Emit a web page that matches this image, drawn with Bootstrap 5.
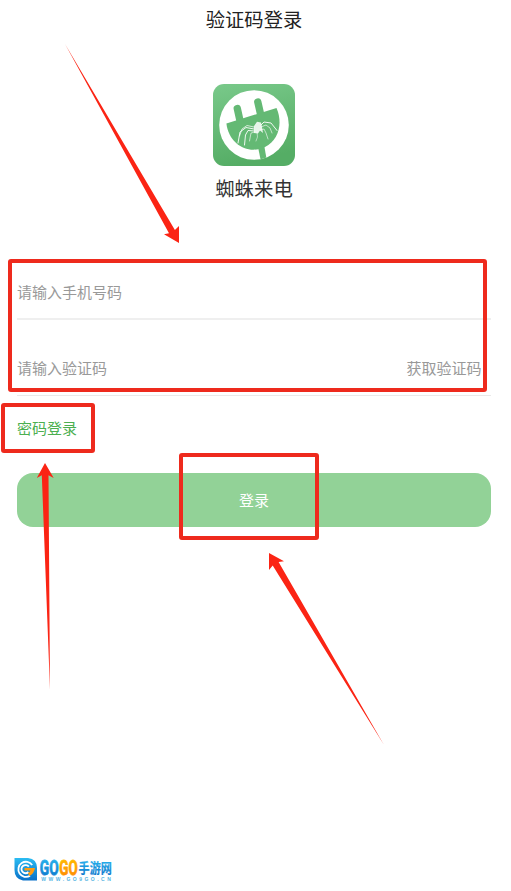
<!DOCTYPE html>
<html lang="zh-CN">
<head>
    <meta charset="UTF-8">
    <meta name="viewport" content="width=device-width, initial-scale=1">
    <title>验证码登录</title>
    <link rel="stylesheet" href="https://cdn.jsdelivr.net/npm/bootstrap@5.3.0/dist/css/bootstrap.min.css">
    <script src="https://cdn.jsdelivr.net/npm/bootstrap@5.3.0/dist/js/bootstrap.bundle.min.js"></script>
    <style>
        body {
            font-family: "Noto Sans CJK SC", sans-serif;
            font-size: 15px;
            color: #333;
            background: #fff;
        }
        .login-page {
            height: 891px;
            padding: 0 20px 0 17px;
            overflow: hidden;
        }
        .page-title {
            height: 40px;
            font-size: 19.3px;
            color: #222;
        }
        .app-brand {
            padding-top: 42.5px;
            height: 223.5px;
        }
        .app-name {
            font-size: 19.4px;
            line-height: 28px;
            margin-top: 7.5px;
        }
        .field-row {
            border-bottom: 2px solid #efefef;
        }
        .field-phone {
            height: 56px;
            padding-top: 2px;
        }
        .field-code {
            height: 76px;
            padding-top: 21px;
            border-bottom: 1px solid #e9e9e9;
        }
        .field-row .form-control,
        .code-btn {
            font-size: 15px;
            line-height: 22px;
            color: #999;
        }
        .field-row .form-control::placeholder { color: #999; }
        .code-btn { margin-right: 9.5px; }
        .pwd-link {
            color: #4caf50;
            line-height: 22px;
            margin-top: 21px;
        }
        .login-btn {
            --bs-btn-color: #fff;
            --bs-btn-bg: #92d297;
            --bs-btn-border-radius: 16px;
            height: 54px;
            margin-top: 34px;
            padding: 1px 0 0;
            font-size: 15px;
        }
        .site-logo { margin-left: -3px; margin-bottom: 8px; }
        .marks { pointer-events: none; }
    </style>
</head>
<body>
<div class="login-page d-flex flex-column position-relative">
    <h1 class="page-title d-flex align-items-center justify-content-center fw-normal mb-0">验证码登录</h1>

    <div class="app-brand d-flex flex-column align-items-center">
        <svg width="84" height="84" viewBox="0 0 84 84">
            <defs>
                <linearGradient id="tile" x1="0" y1="0" x2="0.25" y2="1">
                    <stop offset="0" stop-color="#79c98a"/>
                    <stop offset="1" stop-color="#55ad65"/>
                </linearGradient>
            </defs>
            <rect x="1" y="1" width="82" height="82" rx="11" fill="url(#tile)"/>
            <circle cx="42" cy="42" r="34.8" fill="#fff"/>
            <!-- plug -->
            <g fill="#64b974">
                <path d="M14.4 40.5 L64.5 25 C71 40 67 57 53 64 C37 72 17 62 14.4 40.5Z"/>
                <path d="M25.3 25.5 L28.5 40 M45.8 19 L49 33" stroke="#64b974" stroke-width="7.4" stroke-linecap="round"/>
                <path d="M46 64 L52.3 63 L54.3 74.5 Q51.5 75.9 48.5 76.2Z"/>
            </g>
            <!-- spider -->
            <g fill="none" stroke="#fff" stroke-width=".9" stroke-linejoin="round" stroke-linecap="round">
                <path d="M42 46 L34 44.5 L28 49 L26 60"/>
                <path d="M42 44 L35 42.5 L30 46 L27.5 53" stroke-width=".7"/>
                <path d="M42 48 L36 47.5 L33.5 52 L32.5 62"/>
                <path d="M43 49 L39 50 L37.5 58" stroke-width=".6"/>
                <path d="M49 42 L52 39 L59 40 L65 47.5"/>
                <path d="M49 44 L54 42 L58 45 L60 50" stroke-width=".6"/>
                <path d="M48 47 L52 46 L54 50 L56 56" stroke-width=".6"/>
                <path d="M45 49 L45.5 54 L44 58" stroke-width=".5"/>
            </g>
            <path d="M42 43 L45 38.8 L49 39.5 L50 44 L51 50 L48 47.5 L46 50.5 L42 50Z" fill="#fff" opacity=".85"/>
        </svg>
        <div class="app-name">蜘蛛来电</div>
    </div>

    <form class="d-flex flex-column">
        <div class="field-row field-phone d-flex align-items-center">
            <input type="tel" class="form-control border-0 p-0 shadow-none bg-transparent" placeholder="请输入手机号码">
        </div>
        <div class="field-row field-code d-flex align-items-center">
            <input type="text" class="form-control border-0 p-0 shadow-none bg-transparent" placeholder="请输入验证码">
            <span class="code-btn text-nowrap" role="button">获取验证码</span>
        </div>
        <a href="#" class="pwd-link text-decoration-none align-self-start">密码登录</a>
        <button type="button" class="btn login-btn border-0 w-100">登录</button>
    </form>

    <div class="site-logo mt-auto">
        <svg class="d-block" width="110" height="27" viewBox="0 0 110 27">
            <defs>
                <linearGradient id="blue" x1="0" y1="0" x2="0" y2="1">
                    <stop offset="0" stop-color="#2bbcf2"/>
                    <stop offset="1" stop-color="#0870c8"/>
                </linearGradient>
                <linearGradient id="orange" x1="0" y1="0" x2="0" y2="1">
                    <stop offset="0" stop-color="#ffc400"/>
                    <stop offset="1" stop-color="#ff8000"/>
                </linearGradient>
            </defs>
            <path d="M.5 2 H14 Q23 3 23 12 V24.5 H9 Q.5 23 .5 14Z" fill="url(#blue)"/>
            <path d="M18.2 9 A7.6 7.6 0 1 0 16 19.8" fill="none" stroke="#fff" stroke-width="1.8"/>
            <path d="M14.8 10.6 A4.1 4.1 0 1 0 14.5 16" fill="none" stroke="#fff" stroke-width="1.8"/>
            <path d="M10.5 12 H21 Q20.3 17 15.5 20 L13.8 17 Q16 16 16.6 14.5 H10.5Z" fill="#ff9c10"/>
            <g font-weight="700" stroke-linejoin="round">
                <text x="25.8" y="18.9" font-family="Roboto, sans-serif" font-size="20" textLength="18.8" lengthAdjust="spacingAndGlyphs" fill="url(#blue)" stroke="url(#blue)" stroke-width=".8">GO</text>
                <text x="45.3" y="18.9" font-family="Roboto, sans-serif" font-size="20" textLength="18.4" lengthAdjust="spacingAndGlyphs" fill="url(#orange)" stroke="url(#orange)" stroke-width=".8">GO</text>
                <text x="64.6" y="17.4" font-family="Noto Sans CJK SC, sans-serif" font-size="14" textLength="33.2" lengthAdjust="spacingAndGlyphs" fill="url(#blue)" stroke="url(#blue)" stroke-width=".2">手游网</text>
            </g>
            <text x="27.3" y="24.8" font-family="Liberation Sans, sans-serif" font-size="5" font-weight="700" textLength="69.5" fill="#58b5e2">WWW.GO9GO.CN</text>
        </svg>
    </div>

    <!-- guide frames and arrows over the form -->
    <svg class="marks position-absolute top-0 start-0" width="511" height="891" viewBox="0 0 511 891">
        <g fill="none" stroke="#ee2a1d" stroke-width="4" stroke-linejoin="round">
            <rect x="10" y="261" width="475" height="129" rx="1"/>
            <rect x="3" y="405" width="90" height="46" rx="1"/>
            <rect x="181" y="455" width="136" height="83" rx="1"/>
        </g>
        <g fill="#fb2414">
            <path d="M65 44 L174.9 230 L179 226 V243 L164 234.3 L169 233.2Z"/>
            <path d="M45 463 L53.7 478 L48.5 475.3 L50 690 L41.8 475.3 L36.8 478Z"/>
            <path d="M269 553 L284 561.3 L278.6 562 L384 745 L272.7 565.6 L269 570Z"/>
        </g>
    </svg>
</div>
</body>
</html>
